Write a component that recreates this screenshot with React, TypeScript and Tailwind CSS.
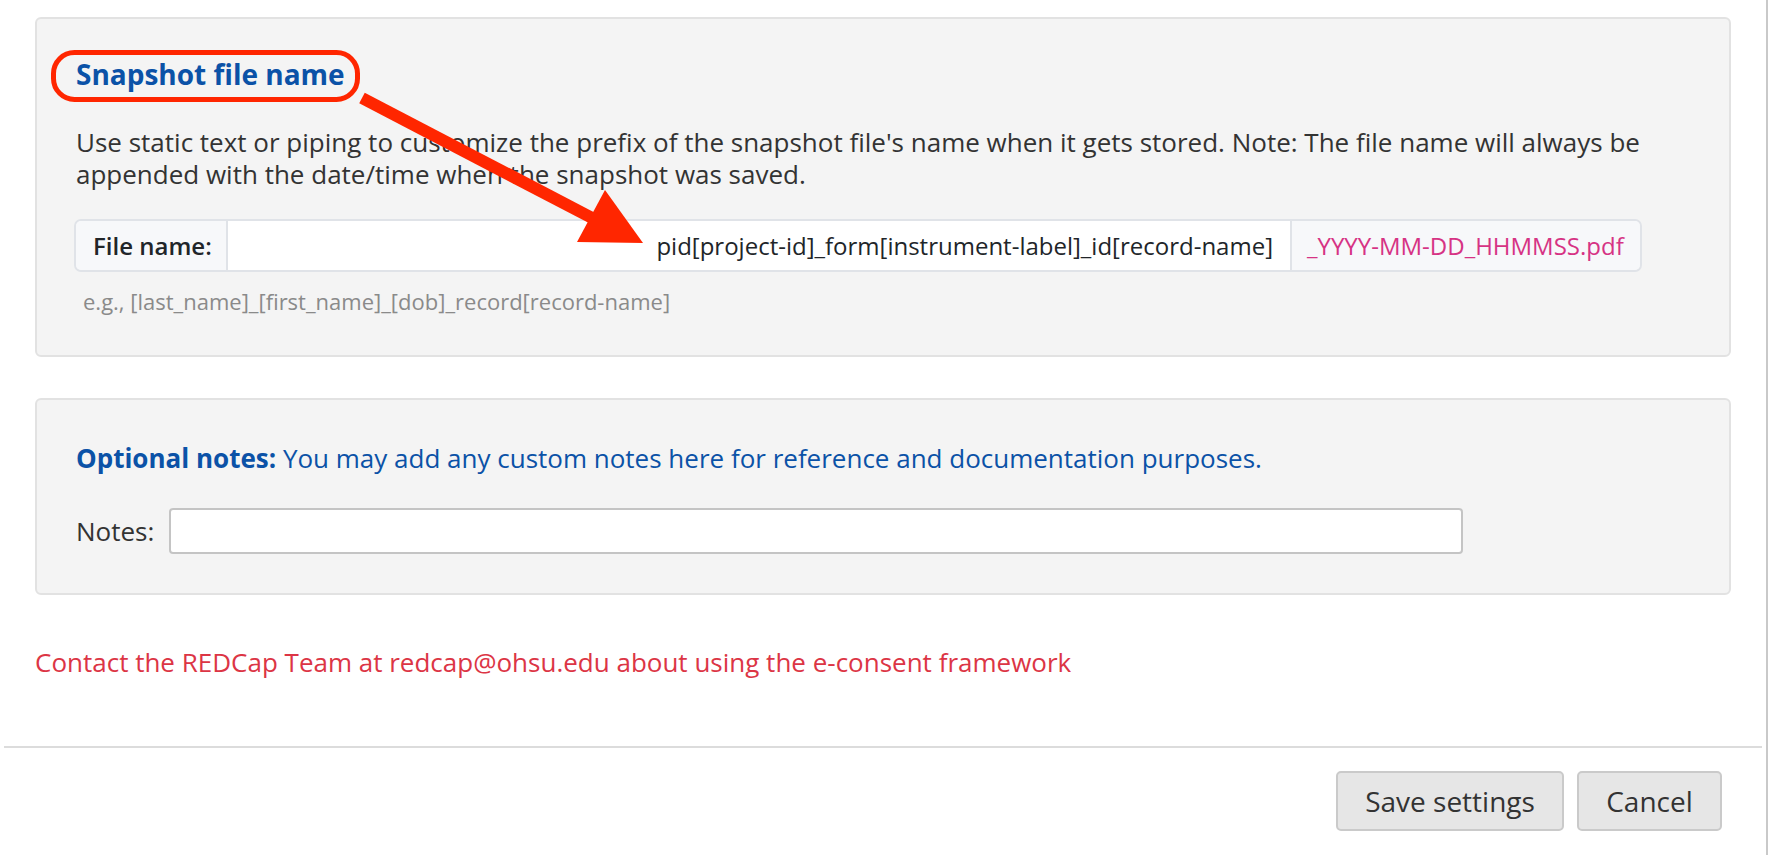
const App = () => {
  return (
    <div className="relative h-[855px] w-full overflow-hidden bg-white font-['Open_Sans',sans-serif] text-[#333]">
      <div className="h-full w-[1768px] border-r-2 border-[#c9c9c9]">
        <div className="px-[35px] pt-[17px]">
          {/* snapshot file name */}
          <div className="rounded-[6px] border-2 border-[#e2e2e2] bg-[#f4f4f4] pb-[40px] pl-[39px] pt-[37px]">
            <div className="text-[28px] font-bold leading-[36px] text-[#0b52a7]">Snapshot file name</div>
            <p className="mt-[34px] pr-[60px] text-[26px] leading-[32px] text-[#333]">
              Use static text or piping to customize the prefix of the snapshot file's name when it gets stored. Note: The file name will always be appended with the date/time when the snapshot was saved.
            </p>
            <div className="ml-[-2px] mt-[29px] flex h-[53px] w-[1568px] overflow-hidden rounded-[7px] border-2 border-[#e0e3e8] text-[24px]">
              <div className="flex w-[152px] shrink-0 items-center border-r-2 border-[#e0e3e8] bg-[#f7f8fa] pl-[17px] font-semibold text-[#212529]">
                File name:
              </div>
              <input
                readOnly
                defaultValue="pid[project-id]_form[instrument-label]_id[record-name]"
                className="min-w-0 flex-1 bg-white pr-[17px] text-right text-[#212529] outline-none"
              />
              <div className="flex w-[350px] shrink-0 items-center border-l-2 border-[#e0e3e8] bg-[#f7f8fa] pl-[15px] text-[#d63384]">
                _YYYY-MM-DD_HHMMSS.pdf
              </div>
            </div>
            <div className="ml-[7px] mt-[15px] text-[22px] leading-[28px] text-[#8a8a8a]">
              e.g., [last_name]_[first_name]_[dob]_record[record-name]
            </div>
          </div>

          {/* notes */}
          <div className="mt-[41px] rounded-[6px] border-2 border-[#e2e2e2] bg-[#f4f4f4] pb-[39px] pl-[39px] pt-[42px]">
            <div className="text-[26px] leading-[32px] text-[#0b52a7]">
              <span className="font-bold">Optional notes:</span> You may add any custom notes here for reference and documentation purposes.
            </div>
            <div className="mt-[34px] flex items-center">
              <label className="w-[93px] shrink-0 text-[26px] text-[#333]">Notes:</label>
              <input className="h-[46px] w-[1294px] rounded-[4px] border-2 border-[#c4c4c4] bg-white outline-none" />
            </div>
          </div>

          <div className="mt-[51px] text-[26px] leading-[32px] text-[#dc3545]">
            Contact the REDCap Team at redcap@ohsu.edu about using the e-consent framework
          </div>
        </div>

        <div className="mx-[4px] mt-[68px] h-[2px] bg-[#dcdcdc]" />

        <div className="mt-[23px] flex justify-end gap-[13px] pr-[44px]">
          <button className="h-[60px] w-[228px] rounded-[5px] border-2 border-[#cacaca] bg-[#e6e6e6] text-[28px] text-[#333]">
            Save settings
          </button>
          <button className="h-[60px] w-[145px] rounded-[5px] border-2 border-[#cacaca] bg-[#e6e6e6] text-[28px] text-[#333]">
            Cancel
          </button>
        </div>
      </div>

      {/* annotation */}
      <svg className="pointer-events-none absolute left-0 top-0" width="1769" height="855">
        <rect x="53.5" y="52.5" width="304" height="47" rx="21" fill="none" stroke="#ff2600" strokeWidth="5" />
        <line x1="362" y1="98" x2="596" y2="220" stroke="#ff2600" strokeWidth="12" />
        <polygon points="643,243 577,242 605,190" fill="#ff2600" />
      </svg>
    </div>
  );
};

export default App;
